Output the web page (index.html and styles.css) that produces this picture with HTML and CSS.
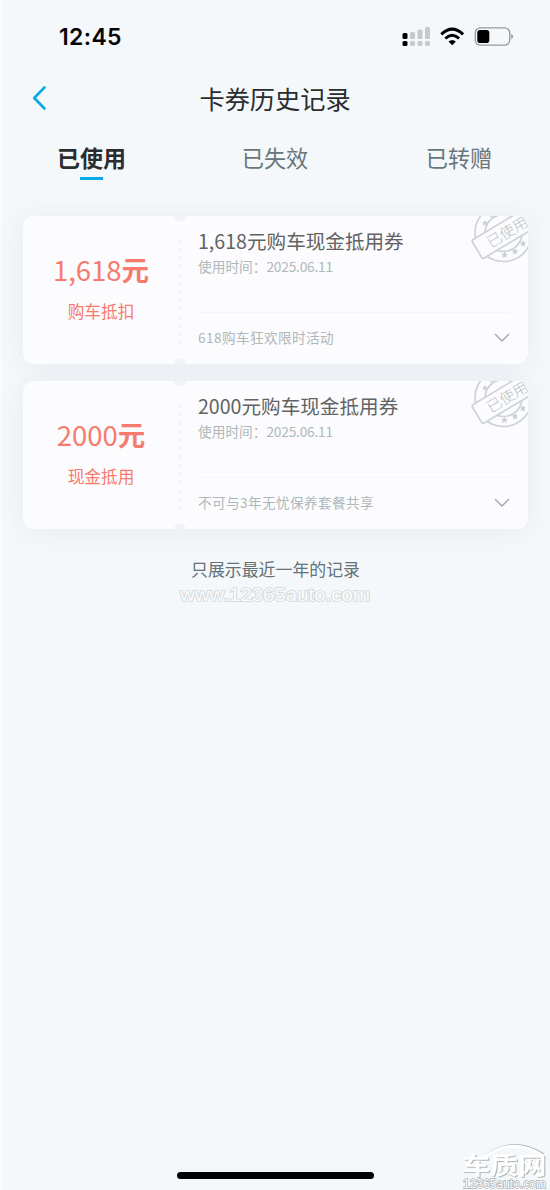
FILE: index.html
```html
<!DOCTYPE html>
<html lang="zh-CN">
<head>
<meta charset="utf-8">
<title>卡券历史记录</title>
<link rel="stylesheet" href="styles.css">
</head>
<body>
<svg class="defs" width="0" height="0">
  <defs>
    <path id="star" d="M0-3.2L.9-1.1 3.1-1 1.4.5 2 2.7 0 1.5-2 2.7-1.4.5-3.1-1-.9-1.1z"/>
    <symbol id="seal" viewBox="0 0 58 48">
      <g fill="none" stroke="#cdd3d5" stroke-width="1.7">
        <circle cx="33.500" cy="17" r="28.500"/>
        <circle cx="33.500" cy="17" r="18.500"/>
      </g>
      <g fill="#c8cfd1">
        <use href="#star" x="15" y="7"/>
        <use href="#star" x="22" y="-1"/>
        <use href="#star" transform="translate(34.500 39) scale(1.100)"/>
        <use href="#star" transform="translate(45 35.500) scale(1.100)"/>
        <use href="#star" transform="translate(53 27.500) scale(1.100)"/>
      </g>
      <g transform="translate(1.500 24.500) rotate(-31)">
        <rect width="74" height="21.500" rx="2" fill="#fcfcfe" stroke="#cdd3d5" stroke-width="1.700"/>
        <text class="seal-text" x="12.500" y="16.500">已使用</text>
      </g>
    </symbol>
  </defs>
</svg>
<main class="screen">
  <header class="status">
    <span class="clock">12:45</span>
    <svg class="status-icons" width="112" height="22" viewBox="0 0 112 22">
      <g fill="#c6c9ca">
        <rect x="8" y="6" width="5" height="7" rx="1.500"/>
        <rect x="15.500" y="3.500" width="5" height="9.500" rx="1.500"/>
        <rect x="23" y="1" width="5" height="12" rx="1.500"/>
        <rect x="8" y="15" width="5" height="5" rx="1.800"/>
        <rect x="15.500" y="15" width="5" height="5" rx="1.800"/>
        <rect x="23" y="15" width="5" height="5" rx="1.800"/>
      </g>
      <rect x=".5" y="7" width="5" height="6" rx="1.500"/>
      <rect x=".5" y="15" width="5" height="5" rx="1.500"/>
      <g fill="none" stroke="#000" stroke-width="3">
        <path d="M39.300 8.300Q50.200-2 61.100 8.300"/>
        <path d="M43.300 12.500Q50.200 6 57.100 12.500"/>
      </g>
      <path d="M46.500 15.600Q50.200 12.300 53.900 15.600L50.200 19.300z"/>
      <rect x="73.300" y="1.800" width="34.400" height="17.400" rx="5" fill="none" stroke="#96999a" stroke-width="1.300"/>
      <rect x="75.300" y="4" width="12" height="13" rx="2.800"/>
      <path d="M109.200 7.700Q113 10.500 109.200 13.300z" fill="#96999a"/>
    </svg>
  </header>
  <nav class="titlebar">
    <svg class="back" width="16" height="26" viewBox="0 0 16 26"><path d="M12.500 2.500L2.200 13l10.300 10.500" fill="none" stroke="#08a9e6" stroke-width="2.600" stroke-linecap="round" stroke-linejoin="round"/></svg>
    <h1>卡券历史记录</h1>
  </nav>
  <div class="tabs">
    <span class="tab active">已使用</span>
    <span class="tab">已失效</span>
    <span class="tab">已转赠</span>
  </div>
  <section class="cards">
    <article class="card">
      <div class="value">
        <div class="amount">1,618<b>元</b></div>
        <div class="kind">购车抵扣</div>
      </div>
      <svg class="perforation" width="12" height="148" viewBox="0 0 12 148"><circle cx="6" cy="-.5" r="6"/><circle cx="6" cy="148.500" r="6"/><path d="M5.500 23v105"/></svg>
      <div class="info">
        <h2>1,618元购车现金抵用券</h2>
        <p class="time">使用时间：<span class="date">2025.06.11</span></p>
        <div class="note"><span>618购车狂欢限时活动</span><svg width="16" height="10" viewBox="0 0 16 10"><path d="M1.500 1.500L8 8l6.500-6.500"/></svg></div>
      </div>
      <svg class="seal" width="58" height="48"><use href="#seal"/></svg>
    </article>
    <article class="card">
      <div class="value">
        <div class="amount">2000<b>元</b></div>
        <div class="kind">现金抵用</div>
      </div>
      <svg class="perforation" width="12" height="148" viewBox="0 0 12 148"><circle cx="6" cy="-.5" r="6"/><circle cx="6" cy="148.500" r="6"/><path d="M5.500 23v105"/></svg>
      <div class="info">
        <h2>2000元购车现金抵用券</h2>
        <p class="time">使用时间：<span class="date">2025.06.11</span></p>
        <div class="note"><span>不可与3年无忧保养套餐共享</span><svg width="16" height="10" viewBox="0 0 16 10"><path d="M1.500 1.500L8 8l6.500-6.500"/></svg></div>
      </div>
      <svg class="seal" width="58" height="48"><use href="#seal"/></svg>
    </article>
  </section>
  <p class="hint">只展示最近一年的记录</p>
  <svg class="site" width="200" height="24" viewBox="0 0 200 24"><text x="5" y="18" textLength="190" lengthAdjust="spacingAndGlyphs">www.12365auto.com</text></svg>
  <div class="home"></div>
  <svg class="brand" width="92" height="50" viewBox="0 0 92 50">
    <path class="arc-shadow" d="M28 15Q55-5 86 14"/>
    <path class="arc" d="M27 16.500Q55-4 86 16"/>
    <text class="brand-name" transform="translate(4 33.500) scale(1.080 .920)" textLength="78" lengthAdjust="spacingAndGlyphs">车质网</text>
    <text class="brand-url" x="5" y="47.500" textLength="83" lengthAdjust="spacingAndGlyphs">12365auto.com</text>
  </svg>
</main>
</body>
</html>
```

FILE: styles.css
```css
* { box-sizing: border-box; }
body {
  margin: 0;
  background: #f4f8fa;
  font-family: "Noto Sans CJK SC", sans-serif;
}
h1, h2, p { margin: 0; font-weight: 400; }
svg { display: block; flex: none; }
.defs { position: absolute; }
.screen {
  position: relative;
  height: 1190px;
  overflow: hidden;
  border-left: 2px solid #f9fcfd;
  display: flex;
  flex-direction: column;
}
.status {
  height: 72px;
  flex: none;
  padding: 2px 36px 0 57px;
  display: flex;
  align-items: center;
  justify-content: space-between;
}
.clock {
  font: 600 23px/30px Inter, sans-serif;
  letter-spacing: .35px;
  color: #050505;
}
.titlebar {
  height: 54px;
  flex: none;
  display: grid;
  grid-template-columns: 60px 1fr 60px;
  align-items: center;
}
.back { margin-left: 30px; margin-top: -3px; }
.titlebar h1 {
  text-align: center;
  font-size: 25.200px;
  line-height: 36px;
  margin: -3px 2px 0 0;
  color: #2b2c2e;
  white-space: nowrap;
}
.tabs {
  height: 90px;
  flex: none;
  padding: 14px 0 0 0;
  margin-right: -1px;
  display: grid;
  grid-template-columns: 179px 188px 180px;
  justify-items: center;
  align-items: start;
}
.tab {
  font-size: 22.200px;
  line-height: 34px;
  color: #68757b;
  display: flex;
  flex-direction: column;
  align-items: center;
}
.tab.active { font-size: 23px; font-weight: 700; color: #2b2c2e; }
.tab.active::after {
  content: "";
  width: 23px;
  height: 3px;
  margin-top: 3px;
  background: #08a9e6;
}
.cards {
  flex: none;
  display: flex;
  flex-direction: column;
  gap: 17px;
  padding: 0 22px 0 21px;
}
.card {
  position: relative;
  height: 148px;
  display: flex;
  border-radius: 11px;
  background: #fcfcfe;
  box-shadow: 0 2px 26px rgba(70, 60, 120, .07);
}
.value {
  width: 151px;
  padding: 31px 0 0 5px;
  display: flex;
  flex-direction: column;
  align-items: center;
  color: #f67b6c;
}
.amount { font-size: 27.500px; line-height: 45px; white-space: nowrap; }
.kind { font-size: 16.700px; line-height: 24px; margin-top: 7px; }
.perforation circle { fill: #f1f4f7; }
.perforation path { stroke: #eceef1; stroke-width: 1.500; stroke-dasharray: 4 4.500; }
.info { flex: 1; padding: 10px 17px 0 12px; }
.info h2 {
  font-size: 19.600px;
  line-height: 30px;
  color: #616263;
  white-space: nowrap;
}
.time { font-size: 13.700px; line-height: 20px; color: #aeb7ba; }
.date { letter-spacing: -.2px; }
.note {
  margin-top: 36px;
  height: 50px;
  border-top: 1px solid #f4f6f7;
  display: flex;
  align-items: center;
  justify-content: space-between;
  font-size: 13.600px;
  letter-spacing: .42px;
  color: #aeb7ba;
}
.note span { margin-top: -1px; }
.note svg { margin: 1px 1px 0 0; }
.note path {
  fill: none;
  stroke: #a4acaf;
  stroke-width: 1.500;
  stroke-linecap: round;
}
.seal {
  position: absolute;
  top: 0;
  right: 0;
  border-top-right-radius: 11px;
  overflow: hidden;
}
.seal-text { font-size: 15px; font-weight: 300; fill: #b9c2c5; }
.hint {
  margin: 27px 1px 1px 0;
  text-align: center;
  font-size: 16.900px;
  line-height: 26px;
  color: #657279;
}
.site { margin: 0 0 0 173px; }
.site text {
  font: 400 18px "Liberation Sans", sans-serif;
  fill: #fafcfd;
  stroke: #d3d7d9;
  stroke-width: 1.700;
  paint-order: stroke;
}
.home {
  width: 197px;
  height: 7px;
  margin: auto 0 11px 175px;
  flex: none;
  border-radius: 4px;
  background: #000;
}
.brand { position: absolute; right: 0; bottom: 0; }
.arc { fill: none; stroke: #fff; stroke-width: 2.500; }
.arc-shadow { fill: none; stroke: #b5b8ba; stroke-width: 1.500; }
.brand-name {
  font-size: 26px;
  font-weight: 700;
  fill: #fff;
  filter: drop-shadow(1px 1px 0 #b0b3b5);
}
.brand-url {
  font: 400 12px "Liberation Sans", sans-serif;
  fill: #fff;
  stroke: #a9acae;
  stroke-width: 1.300;
  paint-order: stroke;
}
```
